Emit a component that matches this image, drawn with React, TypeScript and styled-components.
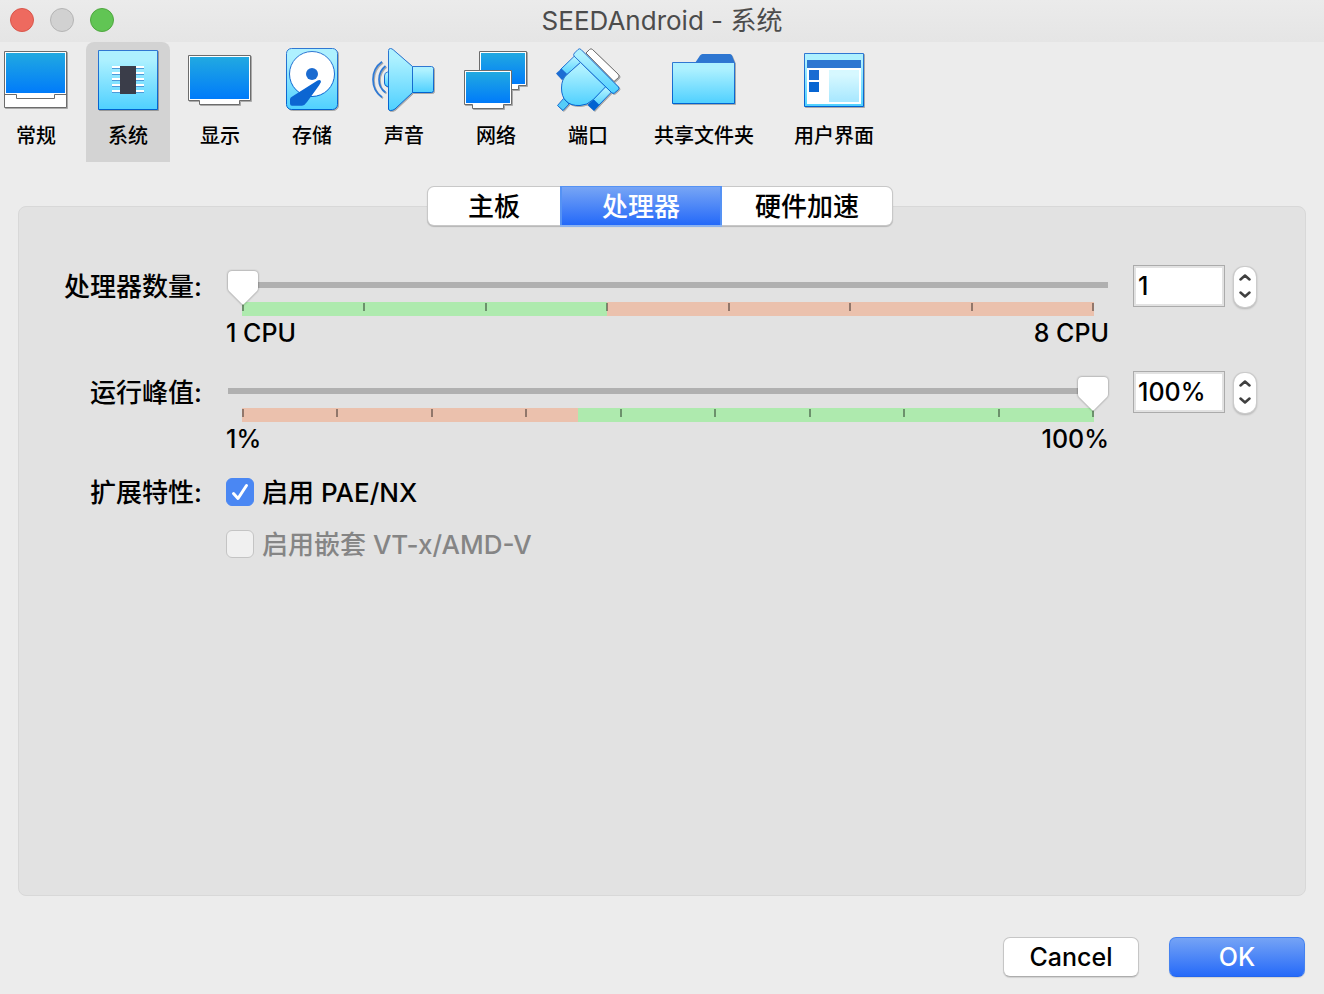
import React, { useState } from "react";
import styled, { createGlobalStyle, css } from "styled-components";

const Global = createGlobalStyle`
  * { box-sizing: border-box; }
  body {
    margin: 0;
    background: #ececec;
    color: #000;
    font-family: Inter, "Noto Sans CJK SC", sans-serif;
    font-size: 25px;
    font-weight: 450;
  }
  button, input { font: inherit; color: inherit; }
`;

const Window = styled.div`
  min-height: 100vh;
  display: flex;
  flex-direction: column;
  overflow: hidden;
`;

const TitleBar = styled.header`
  display: grid;
  grid-template-columns: 1fr auto 1fr;
  align-items: center;
  height: 42px;
  padding: 0 10px 2px;
  background: linear-gradient(#ebebeb, #e5e5e5);
`;

const Lights = styled.div`
  display: flex;
  gap: 16px;
`;

const Light = styled.button<{ $fill: string; $edge: string }>`
  width: 24px;
  height: 24px;
  padding: 0;
  border: 1px solid ${(p) => p.$edge};
  border-radius: 50%;
  background: ${(p) => p.$fill};
`;

const Title = styled.h1`
  margin: 0;
  padding-top: 2px;
  font-size: 26px;
  font-weight: 400;
  line-height: 38px;
  color: #4c4c4c;
`;

const Toolbar = styled.nav`
  display: flex;
  gap: 8px;
  margin-left: -6px;
`;

const ToolItem = styled.button<{ $active: boolean }>`
  display: flex;
  flex-direction: column;
  align-items: center;
  gap: 8px;
  min-width: 84px;
  height: 120px;
  padding: 6px 10px 0;
  border: 0;
  border-radius: 8px 8px 0 0;
  background: ${(p) => (p.$active ? "#d3d3d3" : "transparent")};
  font-size: 20px;
  font-weight: 500;
  line-height: 32px;
  white-space: nowrap;
`;

const ToolName = styled.span`
  padding: 0 6px;
`;

const Icon = styled.svg`
  display: block;
  width: 64px;
  height: 64px;
  flex: none;
  overflow: visible;
  filter: drop-shadow(1px 1px 0 rgba(0, 0, 0, 0.28));
`;

const Body = styled.main`
  flex: 1;
  display: flex;
  flex-direction: column;
  padding: 25px 18px 0;
`;

const Segments = styled.div`
  position: relative;
  z-index: 1;
  display: flex;
  align-self: center;
  height: 38px;
  margin-right: 4px;
  border-radius: 6px;
  background: #fff;
  box-shadow: 0 0 0 1px #c8c8c8, 0 1px 1px 1px rgba(0, 0, 0, 0.2);
`;

const Segment = styled.button<{ $active: boolean; $pad: number }>`
  padding: 2px ${(p) => p.$pad}px 0;
  border: 0;
  background: transparent;
  font-size: 26px;
  line-height: 36px;
  ${(p) =>
    p.$active &&
    css`
      color: #fff;
      background: linear-gradient(#77a5f5, #2469f9);
      box-shadow: inset 2px 0 #5592f4, inset -2px 0 #5592f4, 0 -1px #5592f4,
        0 2px #8ab2f0;
    `}
`;

const Panel = styled.section`
  flex: 1;
  display: grid;
  grid-template-columns: 138px minmax(0, 1fr) auto;
  column-gap: 24px;
  row-gap: 24px;
  align-content: start;
  margin-top: -19px;
  padding: 58px 48px 40px 45px;
  border: 1px solid #d8d8d8;
  border-radius: 8px;
  background: #e2e2e2;
`;

const FieldLabel = styled.label<{ $line: number }>`
  font-size: 26px;
  line-height: ${(p) => p.$line}px;
  text-align: right;
  white-space: nowrap;
`;

const SliderBox = styled.div`
  padding-top: 5px;
`;

const Rail = styled.div`
  height: 36px;
  margin-left: 1px;
  background: linear-gradient(#b0b0b0, #b0b0b0) center 12px / calc(100% - 2px) 6px no-repeat;
  position: relative;
  z-index: 1;
`;

const Range = styled.input`
  appearance: none;
  display: block;
  width: 100%;
  height: 36px;
  margin: 0;
  background: transparent;
  filter: drop-shadow(0 0 1px rgba(0, 0, 0, 0.45));

  &::-webkit-slider-thumb {
    appearance: none;
    width: 32px;
    height: 36px;
    background: #fff;
    clip-path: path("M5 1H27Q31 1 31 5V18Q31 20 30 21L16 35L2 21Q1 20 1 18V5Q1 1 5 1Z");
  }
`;

const Scale = styled.div<{ $from: string; $to: string; $split: number }>`
  display: flex;
  justify-content: space-between;
  height: 14px;
  margin: -4px 15px 0 16px;
  padding-top: 1px;
  background: linear-gradient(
    90deg,
    ${(p) => p.$from} ${(p) => p.$split}%,
    ${(p) => p.$to} ${(p) => p.$split}%
  );
`;

const Tick = styled.span`
  width: 2px;
  height: 8px;
  background: rgba(0, 0, 0, 0.38);
`;

const Ends = styled.div`
  display: flex;
  justify-content: space-between;
  margin-top: 3px;
  line-height: 28px;
`;

const Spin = styled.div`
  display: flex;
  align-items: center;
  gap: 9px;
  height: 42px;
`;

const SpinInput = styled.input`
  width: 92px;
  height: 42px;
  padding: 2px;
  border: 1px solid #ababab;
  border-radius: 0;
  outline: 0;
  background: #fff content-box;
  text-indent: 2px;
`;

const Stepper = styled.div`
  display: flex;
  flex-direction: column;
  width: 22px;
  height: 40px;
  margin: 1px 1px 0 0;
  padding: 1px 0 2px;
  border-radius: 10px;
  background: #fff;
  box-shadow: 0 0 0 1px #cbcbcb, 0 1px 2px 1px rgba(0, 0, 0, 0.2);
`;

const StepButton = styled.button`
  display: flex;
  flex: 1;
  align-items: center;
  justify-content: center;
  padding: 0;
  border: 0;
  background: transparent;
`;

const Checks = styled.div`
  display: flex;
  flex-direction: column;
  gap: 22px;
`;

const Check = styled.label<{ $off?: boolean }>`
  display: flex;
  align-items: center;
  gap: 8px;
  height: 30px;
  font-size: 26px;
  line-height: 30px;
  color: ${(p) => (p.$off ? "#858585" : "#000")};
`;

const CheckText = styled.span`
  padding-top: 2px;
`;

const CheckBox = styled.span`
  display: grid;
  width: 28px;
  height: 28px;

  & > * { grid-area: 1 / 1; }
`;

const CheckInput = styled.input`
  appearance: none;
  width: 28px;
  height: 28px;
  margin: 0;
  border: 1px solid #c4c4c4;
  border-radius: 6px;
  background: #f0f0f0;

  &:checked { background: #4a87f3; border-color: #4a87f3; }
  & + svg { visibility: hidden; pointer-events: none; }
  &:checked + svg { visibility: visible; }
`;

const Footer = styled.footer`
  display: flex;
  justify-content: flex-end;
  gap: 30px;
  padding: 41px 19px 17px;
`;

const PushButton = styled.button<{ $primary?: boolean }>`
  width: 136px;
  height: 40px;
  padding: 0;
  border: 1px solid ${(p) => (p.$primary ? "#4582f0" : "#c6c6c6")};
  border-bottom-color: ${(p) => (p.$primary ? "#2365ee" : "#adadad")};
  border-radius: 7px;
  background: ${(p) => (p.$primary ? "linear-gradient(#77a5f5, #2469f9) border-box" : "#fff")};
  color: ${(p) => (p.$primary ? "#fff" : "#000")};
  box-shadow: 0 1px 1px rgba(0, 0, 0, 0.12);
  line-height: 38px;
`;

const SKY = "url(#sky)";
const EDGE = "url(#edge)";
const SCREEN = "url(#screen)";
const GREY = "#6c6c6c";

const Gradients = () => (
  <svg width="0" height="0" style={{ position: "absolute" }} aria-hidden="true">
    <defs>
      <linearGradient id="sky" x1="0" y1="0" x2="0" y2="1">
        <stop offset="0.15" stopColor="#aef1ff" />
        <stop offset="1" stopColor="#4fd0ff" />
      </linearGradient>
      <linearGradient id="edge" x1="0" y1="0" x2="0" y2="1">
        <stop offset="0" stopColor="#3077d2" />
        <stop offset="1" stopColor="#0062d0" />
      </linearGradient>
      <linearGradient id="screen" x1="0" y1="0" x2="0" y2="1">
        <stop offset="0" stopColor="#21a9e1" />
        <stop offset="1" stopColor="#007bfa" />
      </linearGradient>
    </defs>
  </svg>
);

const GeneralIcon = () => (
  <Icon viewBox="0 0 64 64">
    <path d="M.5 3.5H62.5V59.5H.5Z" fill="#fff" stroke={GREY} />
    <path d="M2 5H61V45H2Z" fill={SCREEN} />
    <path d="M.5 46.5H12.5V50.5H50.5V46.5H62.5" fill="none" stroke={GREY} />
  </Icon>
);

const SystemIcon = () => (
  <Icon viewBox="0 0 64 64">
    <path d="M2.5 2.5H61.5V61.5H2.5Z" fill={SKY} stroke={EDGE} />
    {[18, 24, 30, 36, 42].map((y) => (
      <g key={y}>
        <path d={`M16 ${y}H48V${y + 2}H16Z`} fill="#fff" />
        <path d={`M16 ${y + 2}H48V${y + 3}H16Z`} fill="#4d9ad9" />
      </g>
    ))}
    <path d="M24 18H40V46H24Z" fill="#3a3d49" />
  </Icon>
);

const DisplayIcon = () => (
  <Icon viewBox="0 0 64 64">
    <path d="M.5 7.5H62.5V52.5H51.5V56.5H11.5V52.5H.5Z" fill="#fff" stroke={GREY} />
    <path d="M2 9H61V51H2Z" fill={SCREEN} />
  </Icon>
);

const StorageIcon = () => (
  <Icon viewBox="0 0 64 64">
    <rect x="6.5" y=".5" width="51" height="61" rx="5" fill={SKY} stroke={EDGE} />
    <circle cx="32" cy="26" r="22.5" fill="#fff" stroke={EDGE} />
    <circle cx="32" cy="26" r="6" fill="#1b6bd0" />
    <path d="M37.5 32.4Q41 31 41 34L39 37.5L27 54Q24.500 57.700 22 57.700H12Q10 57.700 10 55.500V51Q10 49.500 13 48Z" fill="#0c66d2" />
  </Icon>
);

const SoundIcon = () => (
  <Icon viewBox="0 0 64 64">
    <path d="M16.500 24H15.500Q12.500 24.500 12.500 28V35Q12.500 38 15.500 38.500H16.500" fill={SKY} stroke={EDGE} />
    <path d="M40.500 18.500H59.500Q61.500 18.500 61.500 20.500V42.500Q61.500 44.500 59.500 44.500H40.500Z" fill={SKY} stroke={EDGE} />
    <path d="M16.500 2.500Q16.500.5 18.500.5Q20 .5 21.500 2L40.500 18.500V44.500L23 61Q21 62.500 18.500 62.500Q16.500 62.500 16.500 61Z" fill={SKY} stroke={EDGE} />
    <path d="M13.500 18Q7 23 7 31.500T13.500 44.500" fill="none" stroke="#2f7ad6" strokeWidth="1.700" />
    <path d="M10 13.700Q1 20 1 31.500T10 49.300" fill="none" stroke="#2f7ad6" strokeWidth="1.700" />
  </Icon>
);

const NetworkIcon = () => (
  <Icon viewBox="0 0 64 64">
    <path d="M15.500 3.500H62.500V37.500H54.500V41.500H20V37.500H15.500Z" fill="#fff" stroke={GREY} />
    <path d="M17 5H61V36H17Z" fill={SCREEN} />
    <path d="M.5 22.500H47.500V56.500H39.500V60.500H8.500V56.500H.5Z" fill="#fff" stroke={GREY} />
    <path d="M2 24H46V55H2Z" fill={SCREEN} />
  </Icon>
);

const PortsIcon = () => (
  <Icon viewBox="0 0 64 64">
    <path d="M30 5L33.500 1.500Q35 0 36.500 1.500L62 26Q64 28 62.500 29.500L58 33.500Z" fill="#fff" stroke={GREY} />
    <path d="M19 7.500L24.500 14.500L10.500 27L4.500 21.500Z" fill={SKY} stroke={EDGE} />
    <path d="M5.500 20.500L11.700 26.500L6 32L0 25.500Z" fill="#1c6dd3" />
    <path d="M49.500 38.500L55.500 44L42.500 57.500L37 51.500Z" fill={SKY} stroke={EDGE} />
    <path d="M37.500 51.300L43.500 57L38 63L31.500 57Z" fill="#0063d1" />
    <path d="M7.500 50.500L13 56L7 62.500L1.500 57.500Z" fill="#55ccf8" stroke={EDGE} />
    <path d="M24.500 14.500L49.700 38.700L37.300 51.500Q31 57.500 24 57.500Q15 58 10 53Q5.500 48.500 5.500 40Q5.500 31 11 26.500Z" fill={SKY} stroke={EDGE} />
    <path d="M18.500 5L22 1.500Q23.500 0 25 1.500L62.500 39Q63.500 40.500 62.500 41.500L58.500 45Q57 46 55.500 44.500L18 8Q17 6.500 18.500 5Z" fill={SKY} stroke={EDGE} />
  </Icon>
);

const FolderIcon = () => (
  <Icon viewBox="0 0 64 64">
    <path d="M23 15L28 7.500Q29 6 30.500 6H58Q59.500 6 60 7.500L63 15Z" fill="#2d76d1" />
    <path d="M.5 14.500H62.500V55.500H.5Z" fill={SKY} stroke={EDGE} />
  </Icon>
);

const InterfaceIcon = () => (
  <Icon viewBox="0 0 64 64">
    <path d="M2.500 5.500H61.500V58.500H2.500Z" fill={SKY} stroke={EDGE} />
    <path d="M5 20H59V56H5Z" fill="#fff" />
    <path d="M5 12H59V20H5Z" fill="#2d76d1" />
    <path d="M7 22H17V32H7Z" fill="#1a6cd2" />
    <path d="M7 34H17V44H7Z" fill="#0765d2" />
    <path d="M27 22H57V54H27Z" fill={SKY} opacity=".5" />
  </Icon>
);

const sections = [
  { name: "常规", Glyph: GeneralIcon },
  { name: "系统", Glyph: SystemIcon },
  { name: "显示", Glyph: DisplayIcon },
  { name: "存储", Glyph: StorageIcon },
  { name: "声音", Glyph: SoundIcon },
  { name: "网络", Glyph: NetworkIcon },
  { name: "端口", Glyph: PortsIcon },
  { name: "共享文件夹", Glyph: FolderIcon },
  { name: "用户界面", Glyph: InterfaceIcon },
];

const tabs = [
  { name: "主板", pad: 40 },
  { name: "处理器", pad: 42 },
  { name: "硬件加速", pad: 33 },
];

const GREEN = "#aeeaae";
const RED = "#ebc1ad";

interface SliderRowProps {
  id: string;
  label: string;
  min: number;
  max: number;
  start: number;
  unit: string;
  suffix: string;
  ticks: number;
  colors: [string, string];
  split: number;
}

function SliderRow({ id, label, min, max, start, unit, suffix, ticks, colors, split }: SliderRowProps) {
  const [value, setValue] = useState(start);
  const update = (next: number) => setValue(Math.min(max, Math.max(min, next || min)));
  return (
    <>
      <FieldLabel htmlFor={id} $line={44}>{label}</FieldLabel>
      <SliderBox>
        <Rail>
          <Range id={id} type="range" min={min} max={max} value={value}
            onChange={(e) => update(Number(e.target.value))} />
        </Rail>
        <Scale $from={colors[0]} $to={colors[1]} $split={split}>
          {Array.from({ length: ticks }, (_, i) => <Tick key={i} />)}
        </Scale>
        <Ends>
          <span>{min}{unit}</span>
          <span>{max}{unit}</span>
        </Ends>
      </SliderBox>
      <Spin>
        <SpinInput type="text" aria-label={label} value={`${value}${suffix}`}
          onChange={(e) => update(parseInt(e.target.value, 10))} />
        <Stepper>
          <StepButton aria-label="+" onClick={() => update(value + 1)}>
            <svg width="12" height="8" viewBox="0 0 12 8" fill="none" stroke="#404040" strokeWidth="2.500" strokeLinecap="round" strokeLinejoin="round">
              <path d="M1.500 6.500L6 2.500L10.500 6.500" />
            </svg>
          </StepButton>
          <StepButton aria-label="−" onClick={() => update(value - 1)}>
            <svg width="12" height="8" viewBox="0 0 12 8" fill="none" stroke="#404040" strokeWidth="2.500" strokeLinecap="round" strokeLinejoin="round">
              <path d="M1.500 1.500L6 5.500L10.500 1.500" />
            </svg>
          </StepButton>
        </Stepper>
      </Spin>
    </>
  );
}

const CheckMark = () => (
  <svg width="28" height="28" viewBox="0 0 28 28" fill="none" stroke="#fff" strokeWidth="3" strokeLinecap="round" strokeLinejoin="round">
    <path d="M7.500 15.500L12 20.500L20.500 7.500" />
  </svg>
);

export default function App() {
  const [section, setSection] = useState("系统");
  const [tab, setTab] = useState("处理器");
  const [pae, setPae] = useState(true);
  return (
    <Window>
      <Global />
      <Gradients />
      <TitleBar>
        <Lights>
          <Light aria-label="Close" $fill="#ee6a5f" $edge="#d9564b" />
          <Light aria-label="Minimize" $fill="#d1d1d1" $edge="#b5b5b5" />
          <Light aria-label="Zoom" $fill="#61c554" $edge="#4fa73f" />
        </Lights>
        <Title>SEEDAndroid - 系统</Title>
      </TitleBar>
      <Toolbar>
        {sections.map(({ name, Glyph }) => (
          <ToolItem key={name} $active={name === section} onClick={() => setSection(name)}>
            <Glyph />
            <ToolName>{name}</ToolName>
          </ToolItem>
        ))}
      </Toolbar>
      <Body>
        <Segments role="tablist">
          {tabs.map(({ name, pad }) => (
            <Segment key={name} role="tab" aria-selected={name === tab} $active={name === tab} $pad={pad}
              onClick={() => setTab(name)}>
              {name}
            </Segment>
          ))}
        </Segments>
        <Panel>
          <SliderRow id="cpus" label="处理器数量:" min={1} max={8} start={1} unit=" CPU" suffix=""
            ticks={8} colors={[GREEN, RED]} split={300 / 7} />
          <SliderRow id="cap" label="运行峰值:" min={1} max={100} start={100} unit="%" suffix="%"
            ticks={10} colors={[RED, GREEN]} split={3900 / 99} />
          <FieldLabel as="span" $line={32}>扩展特性:</FieldLabel>
          <Checks>
            <Check>
              <CheckBox>
                <CheckInput type="checkbox" checked={pae} onChange={(e) => setPae(e.target.checked)} />
                <CheckMark />
              </CheckBox>
              <CheckText>启用 PAE/NX</CheckText>
            </Check>
            <Check $off>
              <CheckBox>
                <CheckInput type="checkbox" disabled />
                <CheckMark />
              </CheckBox>
              <CheckText>启用嵌套 VT-x/AMD-V</CheckText>
            </Check>
          </Checks>
        </Panel>
      </Body>
      <Footer>
        <PushButton>Cancel</PushButton>
        <PushButton $primary>OK</PushButton>
      </Footer>
    </Window>
  );
}
